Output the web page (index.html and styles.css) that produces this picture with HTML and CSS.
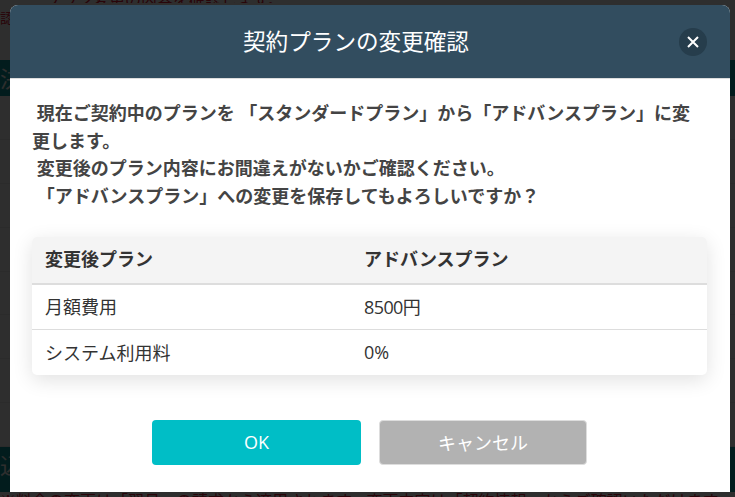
FILE: index.html
```html
<!DOCTYPE html>
<html lang="ja">
<head>
    <meta charset="utf-8">
    <title>契約プランの変更確認</title>
    <link rel="stylesheet" href="styles.css">
</head>
<body>
    <!-- page behind the overlay, only its edges show -->
    <div class="page">
        <p class="page-note page-note-top">プラン変更の内容を確認します。</p>
        <p class="page-label">認</p>
        <div class="page-band page-band-top">決</div>
        <div class="page-rows">
            <div class="page-row"></div>
            <div class="page-row"></div>
            <div class="page-row"></div>
            <div class="page-row"></div>
            <div class="page-row"></div>
            <div class="page-row"></div>
            <div class="page-row"></div>
            <div class="page-row"></div>
        </div>
        <div class="page-band page-band-bottom">込</div>
        <p class="page-note page-note-bottom">※料金の変更は「翌月」の請求から適用されます。変更内容は「契約情報」からご確認いただけます。</p>
    </div>

    <div class="overlay">
        <div class="modal">
            <div class="modal-header">
                <h2 class="modal-title">契約プランの変更確認</h2>
                <button class="modal-close" aria-label="閉じる">
                    <svg width="12" height="12" viewBox="0 0 12 12">
                        <path d="M1 1 L11 11 M11 1 L1 11" stroke="#fff" stroke-width="2" fill="none"/>
                    </svg>
                </button>
            </div>
            <div class="modal-body">
                <p class="message">
                    &nbsp;現在ご契約中のプランを 「スタンダードプラン」から「アドバンスプラン」に変更します。<br>
                    &nbsp;変更後のプラン内容にお間違えがないかご確認ください。<br>
                    &nbsp;「アドバンスプラン」への変更を保存してもよろしいですか？
                </p>
                <table class="plan-table">
                    <thead>
                        <tr>
                            <th class="col-name">変更後プラン</th>
                            <th>アドバンスプラン</th>
                        </tr>
                    </thead>
                    <tbody>
                        <tr>
                            <td>月額費用</td>
                            <td class="amount">8500円</td>
                        </tr>
                        <tr>
                            <td>システム利用料</td>
                            <td>0%</td>
                        </tr>
                    </tbody>
                </table>
                <div class="actions">
                    <button class="btn btn-ok">OK</button>
                    <button class="btn btn-cancel">キャンセル</button>
                </div>
            </div>
        </div>
    </div>
</body>
</html>
```

FILE: styles.css
```css
* {
    box-sizing: border-box;
}
html, body {
    height: 100%;
}
body {
    margin: 0;
    overflow: hidden;
    background: #fff;
    color: #333;
    font-family: "Open Sans", "Noto Sans CJK JP", sans-serif;
}
.page-note {
    margin: 0;
    color: #e0203a;
    font-size: 16px;
    white-space: nowrap;
    overflow: hidden;
}
.page-note-top {
    height: 3px;
    padding-left: 45px;
    line-height: 0;
}
.page-note-bottom {
    height: 5px;
    line-height: 18px;
}
.page-label {
    margin: 4px 0 0;
    height: 53px;
    color: #e0203a;
    font-size: 14px;
}
.page-band {
    background: #0f9a9e;
    color: #fff;
    font-size: 22px;
    line-height: 36px;
    overflow: hidden;
}
.page-band-top {
    height: 36px;
}
.page-band-bottom {
    height: 45px;
}
.page-rows {
    display: flex;
    flex-direction: column;
    height: 351px;
}
.page-row {
    flex: 1;
    border-bottom: 1px solid #eee;
}
.overlay {
    position: fixed;
    top: 0;
    left: 0;
    right: 0;
    bottom: 0;
    padding: 5px 5px 5px 10px;
    background: rgba(0, 0, 0, 0.82);
}
.modal {
    width: 720px;
    height: 487px;
    background: #fff;
    border-radius: 8px 8px 0 0;
    overflow: hidden;
}
.modal-header {
    display: flex;
    align-items: center;
    justify-content: center;
    position: relative;
    height: 74px;
    padding: 0 28px 3px 0;
    background: #324d5f;
    border-bottom: 1px solid #ddd;
}
.modal-title {
    margin: 0;
    color: #fff;
    font-size: 22.6px;
    font-weight: 400;
}
.modal-close {
    position: absolute;
    top: 23px;
    right: 23px;
    display: flex;
    align-items: center;
    justify-content: center;
    width: 28px;
    height: 28px;
    padding: 0;
    border: none;
    border-radius: 50%;
    background: #263d4c;
}
.modal-body {
    padding: 21px 22px 0;
}
.message {
    margin: 0 0 26px;
    padding-right: 2px;
    color: #444;
    font-size: 18px;
    font-weight: 700;
    line-height: 27.7px;
}
.plan-table {
    width: 675px;
    border-collapse: collapse;
    border-radius: 5px;
    box-shadow: 0 5px 20px rgba(0, 0, 0, 0.12);
    font-size: 18px;
    overflow: hidden;
}
.plan-table th {
    height: 47px;
    padding: 0 13px 3px;
    background: #f4f4f4;
    border-bottom: 2px solid #ddd;
    font-size: 18px;
    font-weight: 700;
    text-align: left;
}
.plan-table .col-name {
    width: 319px;
}
.plan-table td {
    height: 46px;
    padding: 0 13px 2px;
    border-bottom: 1px solid #ddd;
}
.plan-table tr:last-child td {
    height: 45px;
    border-bottom: none;
}
.plan-table .amount {
    letter-spacing: -0.6px;
}
.actions {
    display: flex;
    justify-content: center;
    gap: 18px;
    margin-top: 45px;
    padding-right: 1px;
}
.btn {
    height: 45px;
    padding: 0;
    border: none;
    border-radius: 4px;
    color: #fff;
    font-family: inherit;
    font-size: 18px;
}
.btn-ok {
    width: 209px;
    background: #00bec6;
}
.btn-cancel {
    width: 208px;
    background: #b2b2b2;
    border: 1px solid #ddd;
}
```
